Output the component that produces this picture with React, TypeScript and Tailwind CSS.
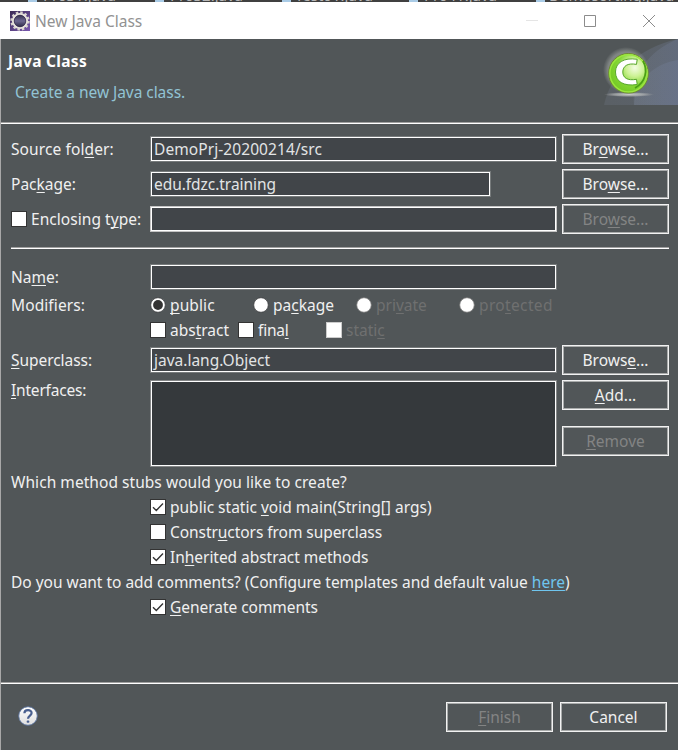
import React from "react";

/** Label with the mnemonic letter underlined; "&" marks the letter. */
function Mn({ t, ls = "", tone = "" }: { t: string; ls?: string; tone?: string }) {
  const i = t.indexOf("&");
  if (i < 0) return <span className={`whitespace-pre ${ls} ${tone}`}>{t}</span>;
  return (
    <span className={`whitespace-pre ${ls} ${tone}`}>
      {t.slice(0, i)}
      <span className="underline decoration-1 underline-offset-[2px] [text-decoration-skip-ink:none]">{t[i + 1]}</span>
      {t.slice(i + 2)}
    </span>
  );
}

function Field({ value = "", ls = "", box = "w-[407px]", ring = "border-[#777b7c]" }: { value?: string; ls?: string; box?: string; ring?: string }) {
  return (
    <div className={`h-[26px] shrink-0 border ${ring} ${box}`}>
      <div className="flex h-full items-center border border-white bg-[#414549] pl-[2px] text-[#e2e4e5]">
        <Mn t={value} ls={ls} />
      </div>
    </div>
  );
}

function Btn({ t, dim = false }: { t: string; dim?: boolean }) {
  return (
    <div className="h-[30px] w-[107px] shrink-0 border border-[#f2f2f2]">
      <div className="flex h-full items-center justify-center border border-[#a9abab]">
        <Mn t={t} tone={dim ? "text-[#838484]" : ""} />
      </div>
    </div>
  );
}

function Check({ t, on = false, dim = false, box = "", ls = "" }: { t: string; on?: boolean; dim?: boolean; box?: string; ls?: string }) {
  return (
    <div className={`flex h-[25px] items-center ${box}`}>
      <div className={`size-4 shrink-0 border bg-white ${dim ? "border-[#cccccc]" : "border-[#333333]"}`}>
        {on && (
          <svg className="block size-[14px]" viewBox="0 0 14 14">
            <path d="M2 7.2 5.3 10.4 12 3.6" fill="none" stroke="#333" strokeWidth="1.4" />
          </svg>
        )}
      </div>
      <div className="flex pl-1">
        <Mn t={t} tone={dim ? "text-[#6f7070]" : ""} ls={ls} />
      </div>
    </div>
  );
}

function Radio({ t, on = false, dim = false, ls = "" }: { t: string; on?: boolean; dim?: boolean; ls?: string }) {
  return (
    <div className="flex h-[25px] w-[103px] items-center">
      <svg className="size-4 shrink-0" viewBox="0 0 16 16">
        <circle cx="8" cy="8" r="7.3" fill="#fff" stroke={dim ? "#777" : "#3c3e40"} strokeWidth=".8" />
        {on && <circle cx="8" cy="8" r="4.9" fill="#333" />}
      </svg>
      <div className="pl-1">
        <Mn t={t} tone={dim ? "text-[#6f7070]" : ""} ls={ls} />
      </div>
    </div>
  );
}

function Rule({ box = "" }: { box?: string }) {
  return <div className={`h-[2px] border-t border-b border-t-[#a0a0a0] border-b-white ${box}`} />;
}

function EclipseIcon() {
  return (
    <svg className="size-5 shrink-0" viewBox="0 0 20 20">
      <defs>
        <linearGradient id="ecl" x1="0" y1="0" x2="1" y2="1">
          <stop offset="0" stopColor="#3b2c55" />
          <stop offset="1" stopColor="#7a58b0" />
        </linearGradient>
        <linearGradient id="lens" x1="0" y1="0" x2="0" y2="1">
          <stop offset="0" stopColor="#33304d" />
          <stop offset=".5" stopColor="#6d6790" />
          <stop offset="1" stopColor="#2c2945" />
        </linearGradient>
      </defs>
      <rect width="20" height="20" fill="url(#ecl)" />
      <circle cx="10" cy="10" r="8.5" fill="none" stroke="#d8d4ce" strokeWidth="2.4" strokeDasharray="2.45 2" />
      <circle cx="10" cy="10" r="7" fill="none" stroke="#e6e2dc" strokeWidth="2.2" />
      <circle cx="10" cy="10" r="5.8" fill="url(#lens)" stroke="#2b2540" strokeWidth=".6" />
    </svg>
  );
}

function ClassBanner() {
  return (
    <svg className="h-[66px] w-[76px] shrink-0" viewBox="0 0 76 66">
      <defs>
        <radialGradient id="ball" cx=".66" cy=".36" r=".62">
          <stop offset="0" stopColor="#f4fce6" />
          <stop offset=".35" stopColor="#cdf295" />
          <stop offset=".7" stopColor="#84d636" />
          <stop offset="1" stopColor="#78cc28" />
        </radialGradient>
        <radialGradient id="glow">
          <stop offset=".78" stopColor="#c8ccc6" stopOpacity=".4" />
          <stop offset="1" stopColor="#c8ccc6" stopOpacity="0" />
        </radialGradient>
        <radialGradient id="floor">
          <stop offset="0" stopColor="#c8cac8" />
          <stop offset=".6" stopColor="#b0b3b3" stopOpacity=".7" />
          <stop offset="1" stopColor="#aaaaaa" stopOpacity="0" />
        </radialGradient>
        <linearGradient id="sweep" x1="0" y1="0" x2="1" y2="0">
          <stop offset="0" stopColor="#8690a6" stopOpacity=".17" />
          <stop offset="1" stopColor="#7a88ac" stopOpacity=".24" />
        </linearGradient>
      </defs>
      <path d="M2 66C9 33 37 9 76 0V66Z" fill="url(#sweep)" />
      <path d="M32 66C29 38 45 12 76 0V66Z" fill="url(#sweep)" />
      <path d="M32 66C33 42 51 25 76 21V66Z" fill="url(#sweep)" />
      <ellipse cx="27" cy="55.500" rx="25" ry="2.500" fill="url(#floor)" />
      <circle cx="24" cy="31" r="23" fill="url(#glow)" />
      <circle cx="26.500" cy="34.300" r="19.800" fill="url(#ball)" stroke="#6f8a30" strokeWidth="1" />
      <circle cx="26.500" cy="34.300" r="18.600" fill="none" stroke="#9be63f" strokeWidth="1.400" />
      <path d="M41 22C46 31 44 43 33 49" fill="none" stroke="#4a9f14" strokeWidth="1.800" />
      <path d="M34.500 25.400L35.200 20.300C21.500 18.200 13.500 24 13.500 33C13.500 42.500 21.500 47.600 35.200 45.500L34.500 40.300C25.500 42 20.800 38.800 20.800 33C20.800 27.200 25.500 23.700 34.500 25.400Z" fill="#fff" stroke="#57a62a" strokeWidth="1" />
    </svg>
  );
}

function HelpIcon() {
  return (
    <svg className="-mt-[2px] size-5" viewBox="0 0 20 20">
      <defs>
        <linearGradient id="help" x1="0" y1="0" x2="0" y2="1">
          <stop offset="0" stopColor="#ffffff" />
          <stop offset="1" stopColor="#dedede" />
        </linearGradient>
      </defs>
      <circle cx="10" cy="10" r="9.300" fill="url(#help)" stroke="#566f9d" strokeWidth=".9" />
      <path d="M6.400 7.300C6.400 3.100 13.600 3.100 13.600 7C13.600 9.500 10 9.700 10 12.800" fill="none" stroke="#4a6090" strokeWidth="2.200" />
      <rect x="8.700" y="14.400" width="2.600" height="2.400" rx=".8" fill="#4a6090" />
    </svg>
  );
}

const TABS = ["T1031.java", "T1032.java", "Test01.java", "T1041.java", "Demosorting.java"];

export default function App() {
  return (
    <div className="flex h-[750px] w-[678px] flex-col overflow-hidden bg-[#515658] text-[15.5px] leading-5 text-[#f0f0f0] [font-family:'Noto_Sans','Open_Sans',sans-serif]">
      <div className="flex h-[2px] shrink-0 items-end overflow-hidden bg-[#404040] pl-[28px] text-[15px] text-[#b8b8b8]">
        {TABS.map((t) => (
          <div key={t} className="flex w-[127px] shrink-0 items-end">
            <i className="mr-1 h-[2px] w-[9px] shrink-0 bg-[#a9cbe6]" />
            <span className="-mb-[3px] whitespace-nowrap">{t}</span>
          </div>
        ))}
      </div>
      <div className="flex h-[37px] shrink-0 items-center bg-white pl-[10px] text-[#929292]">
        <EclipseIcon />
        <span className="grow pl-[5px]">New Java Class</span>
        <svg className="h-5 w-[160px] shrink-0" viewBox="0 0 160 20" fill="none">
          <path d="M8 9.500H20" stroke="#e5e5e5" />
          <path d="M66.500 4.500H77.500V15.500H66.500Z" stroke="#8c8c8c" />
          <path d="M125 4L137 16M137 4L125 16" stroke="#8c8c8c" />
        </svg>
      </div>

      <div className="flex grow flex-col border-l border-[#a8a8a8]">
        <div className="flex h-[83px] shrink-0 justify-between">
          <div className="pl-[7px] pt-[12px]">
            <div className="font-bold tracking-[0.3px] text-white">Java Class</div>
            <div className="pl-[7px] pt-[11px] tracking-[-0.05px] text-[#91c3d4]">Create a new Java class.</div>
          </div>
          <ClassBanner />
        </div>
        <Rule />

        <div className="flex h-[558px] shrink-0 flex-col pl-[10px] pr-[9px]">
          <div className="mt-[10px] flex h-[30px] items-center">
            <div className="w-[139px]"><Mn t="Source fol&der:" ls="tracking-[0.1px]" /></div>
            <Field value="DemoPrj-20200214/src" ls="tracking-[0.08px]" />
            <div className="pl-[5px]"><Btn t="Br&owse..." /></div>
          </div>
          <div className="mt-[5px] flex h-[30px] items-center">
            <div className="w-[139px]"><Mn t="Pac&kage:" /></div>
            <Field value="edu.fdzc.training" ls="tracking-[-0.05px]" box="w-[341px]" />
            <div className="pl-[71px]"><Btn t="Bro&wse..." /></div>
          </div>
          <div className="mt-[5px] flex h-[30px] items-center">
            <div className="w-[139px]"><Check t="Enclosing t&ype:" ls="tracking-[0.05px]" /></div>
            <Field ring="border-[#c4c4c4]" />
            <div className="pl-[5px]"><Btn t="Bro&wse..." dim /></div>
          </div>
          <Rule box="mt-[13px] shrink-0" />
          <div className="mt-[15px] flex h-[26px] items-center">
            <div className="w-[139px]"><Mn t="Na&me:" /></div>
            <Field />
          </div>
          <div className="mt-[2px] flex h-[25px] items-center">
            <div className="w-[139px]"><Mn t="Modifiers:" ls="tracking-[0.1px]" /></div>
            <Radio t="&public" on ls="tracking-[0.1px]" />
            <Radio t="pa&ckage" />
            <Radio t="pri&vate" dim />
            <Radio t="pro&tected" dim ls="tracking-[0.35px]" />
          </div>
          <div className="flex pl-[139px]">
            <Check t="abs&tract" box="w-[88px]" />
            <Check t="fina&l" box="w-[88px]" ls="tracking-[-0.2px]" />
            <Check t="stati&c" dim />
          </div>
          <div className="mt-[3px] flex h-[30px] items-center">
            <div className="w-[139px]"><Mn t="&Superclass:" ls="tracking-[-0.05px]" /></div>
            <Field value="java.lang.Object" />
            <div className="pl-[5px]"><Btn t="Brows&e..." /></div>
          </div>
          <div className="mt-[5px] flex h-[87px]">
            <div className="w-[139px]"><Mn t="&Interfaces:" ls="tracking-[-0.2px]" /></div>
            <div className="w-[407px] border border-[#858788]">
              <div className="h-full border border-white bg-[#35393c]" />
            </div>
            <div className="flex flex-col gap-4 pl-[5px]">
              <Btn t="&Add..." />
              <Btn t="&Remove" dim />
            </div>
          </div>
          <div className="mt-[2px] flex h-[25px] items-center">
            <Mn t="Which method stubs would you like to create?" ls="tracking-[0.05px]" />
          </div>
          <div className="pl-[139px]">
            <Check t="public static &void main(String[] args)" on />
            <Check t="Constr&uctors from superclass" ls="tracking-[-0.06px]" />
            <Check t="In&herited abstract methods" on ls="tracking-[-0.04px]" />
          </div>
          <div className="flex h-[25px] items-center whitespace-pre tracking-[-0.02px]">
            <span>Do you want to add comments? (Configure templates and default value </span>
            <span className="text-[#6fc5ee] underline decoration-1 underline-offset-[2px]">here</span>)
          </div>
          <div className="pl-[139px]">
            <Check t="&Generate comments" on ls="tracking-[-0.04px]" />
          </div>
        </div>

        <Rule />
        <div className="flex h-[66px] items-center gap-[7px] pl-[17px] pr-[11px]">
          <div className="grow"><HelpIcon /></div>
          <Btn t="&Finish" dim />
          <Btn t="Cancel" />
        </div>
      </div>
    </div>
  );
}
